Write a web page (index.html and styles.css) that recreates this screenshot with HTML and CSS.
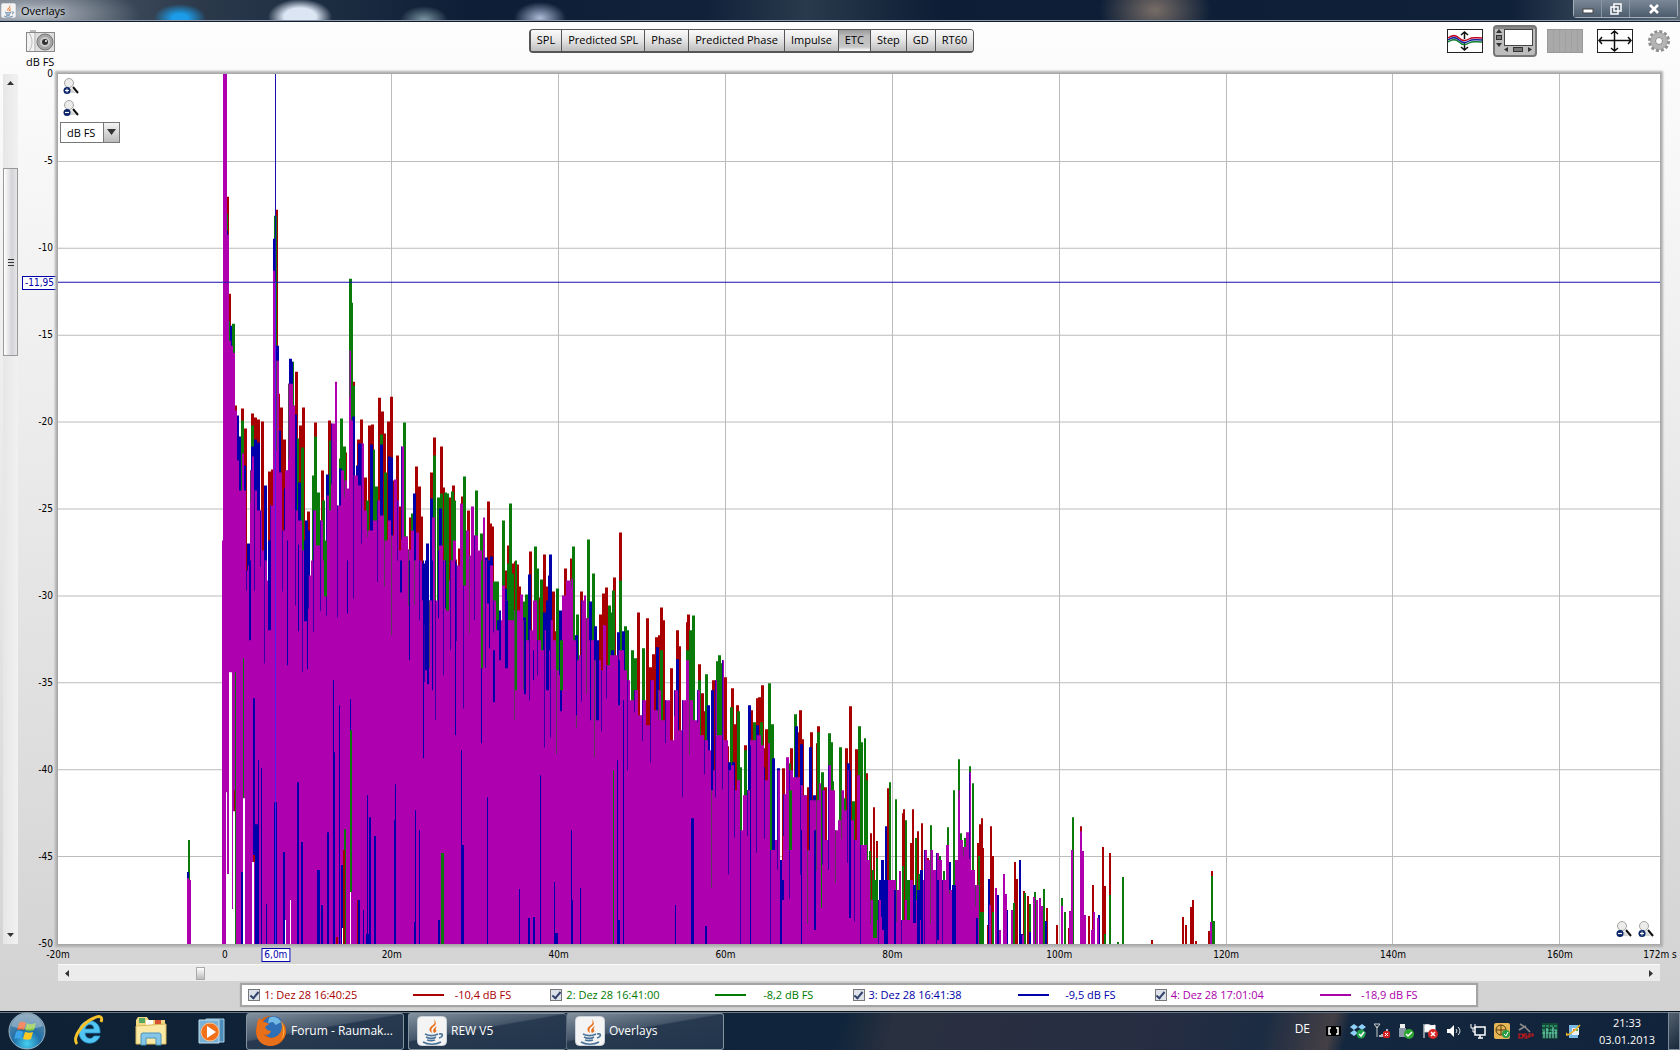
FILE: index.html
```html
<!DOCTYPE html>
<html lang="de">
<head>
    <meta charset="UTF-8">
    <meta name="viewport" content="width=device-width, initial-scale=1.0">
    <title>Overlays</title>
    <link rel="stylesheet" href="styles.css">
</head>
<body>
    <svg class="defs" aria-hidden="true">
        <symbol id="java" viewBox="0 0 30 30">
            <rect x="0.5" y="0.5" width="29" height="29" rx="4" fill="#f4f4f4" stroke="#ccd3da"/>
            <path d="M15 17c-4-3-3-5 1-8 2-2 2-3 1-6 3 4 2 6-1 8-2 2-2 3-1 6z" fill="#e76f1b"/>
            <path d="M17 17c-2-3 0-5 3-7-1 2-2 3-1 4s0 2-2 3z" fill="#e76f1b"/>
            <path d="M8 18c4 2 9 2 13 0M9 21c4 2 7 2 10 0M10 24c3 1 5 1 8 0M6 26c5 3 13 3 18 0M22 18c5-1 4 3 0 4" fill="none" stroke="#4a7399" stroke-width="1.6"/>
        </symbol>
        <symbol id="zoom" viewBox="0 0 16 16">
            <path d="M8 10l5 5H4z" fill="#d4d8d4"/>
            <path d="M10 9l5 6" stroke="#111" stroke-width="2"/>
            <circle cx="6" cy="5" r="4.500" fill="#ececea" stroke="#a4a4a4"/>
            <circle cx="4" cy="12.500" r="3.500" fill="#0a246a"/>
            <path d="M2 12.500h4" stroke="#fff" stroke-width="1.200"/>
        </symbol>
    </svg>

    <header class="titlebar">
        <svg class="title-icon"><use href="#java"/></svg>
        <span class="title">Overlays</span>
        <div class="window-buttons">
            <button aria-label="Minimize"><svg width="12" height="12"><rect x="1" y="6" width="10" height="4" fill="#fff" stroke="#444"/></svg></button>
            <button aria-label="Restore"><svg width="12" height="12"><path d="M4 1h7v7H4zM1 4h7v7H1z" fill="#5a6878" stroke="#fff" stroke-width="1.500"/></svg></button>
            <button class="close" aria-label="Close"><svg width="12" height="12"><path d="M2 2l8 8M10 2l-8 8" stroke="#fff" stroke-width="2.500"/></svg></button>
        </div>
    </header>

    <main class="app">
        <div class="toolbar">
            <button class="icon-button" aria-label="Capture image">
                <svg width="30" height="24" viewBox="0 0 30 24">
                    <rect x="4" y="1" width="6" height="3" fill="#bbb"/>
                    <rect x="0.5" y="3.500" width="28" height="19" fill="#ddd" stroke="#888"/>
                    <path d="M1 4h7v18H1z" fill="#f2f2f2"/>
                    <path d="M3 4c4 5 4 13 0 18M9 4v18" stroke="#bbb" fill="none"/>
                    <circle cx="19" cy="13" r="8" fill="#a4a4a4" stroke="#777"/>
                    <circle cx="19" cy="13" r="5" fill="#ccc"/>
                    <circle cx="19" cy="13" r="3" fill="#333"/>
                    <circle cx="20" cy="12" r="1" fill="#fff"/>
                </svg>
            </button>
            <nav class="tabs">
                <button>SPL</button><button>Predicted SPL</button><button>Phase</button><button>Predicted Phase</button><button>Impulse</button><button class="active">ETC</button><button>Step</button><button>GD</button><button>RT60</button>
            </nav>
            <div class="tools">
                <button class="icon-button" aria-label="Separate traces">
                    <svg width="36" height="24">
                        <rect x="0.5" y="0.5" width="35" height="23" fill="#fff" stroke="#222"/>
                        <path d="M17.500 3v7M17.500 14v7M14 6l3.500-3 3.500 3M14 18l3.500 3 3.500-3" fill="none" stroke="#111" stroke-width="1.500"/>
                        <path d="M1 9c4-3 8-3 11 0s7 3 10 1 6-1 13-1" fill="none" stroke="#c00020" stroke-width="1.500"/>
                        <path d="M1 11c4-3 8-3 11 0s7 3 10 1 6-1 13-1" fill="none" stroke="#1020a0" stroke-width="1.500"/>
                        <path d="M1 13c4-3 8-3 11 0s7 3 10 1 6-1 13-1" fill="none" stroke="#108030" stroke-width="1.500"/>
                    </svg>
                </button>
                <button class="icon-button" aria-label="Scrollbars">
                    <svg width="44" height="32">
                        <rect x="1" y="1" width="42" height="30" rx="3" fill="#bdbdbd" stroke="#777" stroke-width="2"/>
                        <path d="M2 3h40" stroke="#888" stroke-width="2"/>
                        <rect x="11.500" y="4.500" width="28" height="16" fill="#fff" stroke="#444"/>
                        <path d="M3 8l3-4 3 4zM3 18l3 4 3-4zM15 22v5l-4-2.500zM35 22v5l4-2.500z" fill="#333"/>
                        <rect x="3.500" y="10.500" width="5" height="4" fill="#777" stroke="#333"/>
                        <rect x="20.500" y="22.500" width="9" height="4" fill="#777" stroke="#333"/>
                    </svg>
                </button>
                <button class="icon-button" aria-label="Frequency bands">
                    <svg width="36" height="24">
                        <rect x="0.5" y="0.5" width="35" height="23" fill="#a9a9a9" stroke="#999"/>
                        <path d="M6.500 1v22M12.500 1v22M18.500 1v22M24.500 1v22M30.500 1v22" stroke="#a0a0a0"/>
                    </svg>
                </button>
                <button class="icon-button limits" aria-label="Limits">
                    <svg width="36" height="24">
                        <rect x="0.5" y="0.5" width="35" height="23" fill="#fff" stroke="#222"/>
                        <path d="M2 11.500h32M17.500 2v20M5 8l-3 3.500 3 3.500M31 8l3 3.500-3 3.500M14 5l3.500-3 3.500 3M14 19l3.500 3 3.500-3" fill="none" stroke="#111" stroke-width="1.500"/>
                    </svg>
                </button>
                <button class="icon-button gear" aria-label="Controls">
                    <svg width="22" height="22" viewBox="-11 -11 22 22">
                        <circle r="9.500" fill="none" stroke="#8f8f8f" stroke-width="3" stroke-dasharray="3 1.970"/>
                        <circle r="6" fill="none" stroke="#b4b4b4" stroke-width="5"/>
                        <circle r="8.500" fill="none" stroke="#8c8c8c" stroke-width="0.600"/>
                        <circle r="3.500" fill="#fafafa" stroke="#888"/>
                    </svg>
                </button>
            </div>
        </div>

        <div class="unit">dB FS</div>

        <div class="graph">
            <div class="vscroll">
                <button aria-label="Scroll up"><svg width="7" height="5"><path d="M0 5l3.500-4L7 5z" fill="#333"/></svg></button>
                <div class="vthumb"><i></i><i></i><i></i></div>
                <button aria-label="Scroll down"><svg width="7" height="5"><path d="M0 0l3.500 4L7 0z" fill="#333"/></svg></button>
            </div>
            <div class="yaxis">
                <span>0</span><span>-5</span><span>-10</span><span>-15</span><span>-20</span><span>-25</span><span>-30</span><span>-35</span><span>-40</span><span>-45</span><span>-50</span>
                <b class="ycursor">-11,95</b>
            </div>
            <div class="plot">
                <svg id="chart" viewBox="58 73 1602 871" preserveAspectRatio="none" role="img" aria-label="ETC overlays"></svg>
                <div class="plot-tools">
                    <button class="icon-button" aria-label="Zoom in vertically"><svg width="16" height="16"><use href="#zoom"/><path d="M4 10.500v4" stroke="#fff"/></svg></button>
                    <button class="icon-button" aria-label="Zoom out vertically"><svg width="16" height="16"><use href="#zoom"/></svg></button>
                    <span class="select-box">
                        <select aria-label="Y axis unit"><option>dB FS</option><option>%FS</option></select>
                        <svg width="15" height="18"><path d="M3 6h9l-4.500 6z" fill="#333"/></svg>
                    </span>
                </div>
                <div class="plot-zoom">
                    <button class="icon-button" aria-label="Zoom out"><svg width="16" height="16"><use href="#zoom"/></svg></button>
                    <button class="icon-button" aria-label="Zoom in"><svg width="16" height="16"><use href="#zoom"/><path d="M4 10.500v4" stroke="#fff"/></svg></button>
                </div>
            </div>
        </div>

        <div class="below">
            <div class="xaxis">
                <span>-20m</span><span>0</span><span>20m</span><span>40m</span><span>60m</span><span>80m</span><span>100m</span><span>120m</span><span>140m</span><span>160m</span><span>172m s</span>
                <b class="xcursor">6,0m</b>
            </div>
            <div class="hscroll">
                <button aria-label="Scroll left"><svg width="5" height="7"><path d="M5 0v7L1 3.500z" fill="#333"/></svg></button>
                <div class="hthumb"></div>
                <button aria-label="Scroll right"><svg width="5" height="7"><path d="M0 0v7l4-3.500z" fill="#333"/></svg></button>
            </div>
            <div class="legend">
                <label class="red"><input type="checkbox" checked><span>1: Dez 28 16:40:25</span><i></i><output>-10,4 dB FS</output></label>
                <label class="green"><input type="checkbox" checked><span>2: Dez 28 16:41:00</span><i></i><output>-8,2 dB FS</output></label>
                <label class="blue"><input type="checkbox" checked><span>3: Dez 28 16:41:38</span><i></i><output>-9,5 dB FS</output></label>
                <label class="purple"><input type="checkbox" checked><span>4: Dez 28 17:01:04</span><i></i><output>-18,9 dB FS</output></label>
            </div>
        </div>
    </main>

    <footer class="taskbar">
        <button class="start" aria-label="Start">
            <svg width="38" height="38" viewBox="0 0 38 38">
                <defs>
                    <radialGradient id="orb" cx="50%" cy="85%" r="85%"><stop offset="0" stop-color="#45d0f0"/><stop offset="0.45" stop-color="#2070a8"/><stop offset="1" stop-color="#6f8ea4"/></radialGradient>
                </defs>
                <circle cx="19" cy="19" r="18" fill="url(#orb)" stroke="#9db4c4"/>
                <path d="M11 11c3-2 5-1 7 0l-2 7c-2-1-4-1-7 0z" fill="#ee5b22"/>
                <path d="M19 11c3 2 6 1 9 0l-2 7c-3 1-6 1-9 0z" fill="#8cc63e"/>
                <path d="M8 20c3-2 5-1 7 0l-2 7c-2-1-4-1-7 0z" fill="#3aa5e8"/>
                <path d="M17 20c3 1 6 1 8 0l-2 7c-2 1-5 1-8 0z" fill="#fdc820"/>
                <path d="M3 14C6 4 14 2 19 2s13 2 16 12c-9 4-23 4-32 0z" fill="#fff" opacity="0.300"/>
            </svg>
        </button>
        <div class="pinned">
            <button class="ie" aria-label="Internet Explorer">
                <svg width="30" height="32" viewBox="0 0 30 32">
                    <path d="M26 18H11c0 6 7 7 9 3h6c-4 11-21 9-21-4C5 2 27 2 26 18zM11 14h9c0-6-8-6-9 0z" fill="#52c4f2" stroke="#2793cf" stroke-width="0.800"/>
                    <path d="M3 29C-2 23 8 8 20 3c6-3 9-1 7 4" fill="none" stroke="#f6c22c" stroke-width="3"/>
                </svg>
            </button>
            <button aria-label="Explorer">
                <svg width="32" height="30" viewBox="0 0 32 30">
                    <path d="M1 4l2-3h9l2 3h16v24H1z" fill="#eed682"/>
                    <path d="M4 2h6v5H4z" fill="#58a862"/><path d="M11 4h7v5h-7z" fill="#fff"/><path d="M20 4h6v5h-6z" fill="#d85030"/>
                    <path d="M1 10l30-2v20H1z" fill="#fae9a4" stroke="#d8b95c"/>
                    <path d="M6 29V19q0-2 2-2h16q2 0 2 2v10h-5v-7H11v7z" fill="#85c5e8" stroke="#4b94be"/>
                </svg>
            </button>
            <button aria-label="Media Player">
                <svg width="27" height="27" viewBox="0 0 27 27">
                    <path d="M8 1h18v23H8z" fill="#4c8cb8" stroke="#a9d1e8"/>
                    <path d="M1 2h20v23H1z" fill="#79b2d6" stroke="#c4e0f0"/>
                    <circle cx="12" cy="14" r="9" fill="#f0701c" stroke="#ffc08a"/>
                    <path d="M9 8l9 6-9 6z" fill="#fff"/>
                </svg>
            </button>
        </div>
        <div class="tasks">
            <button class="task">
                <svg width="32" height="32" viewBox="0 0 32 32">
                    <circle cx="16" cy="16" r="15" fill="#e66000"/>
                    <circle cx="18" cy="12" r="11" fill="#2f6fb5"/>
                    <path d="M14 3c5-3 10 0 12 4l-5 3-3-3-5 1z" fill="#74b8e4"/>
                    <path d="M2 8l2-5 4 4c3 0 5 1 6 2l-4 3 2 3 4 1c-2 5-5 4-8 3 3 6 13 5 17-1 3-5 2-10 0-13 5 5 8 13 3 19-7 10-22 9-26-2-1-5 0-10 0-14z" fill="#e9701a"/>
                    <path d="M25 5c5 6 6 14 1 20 4-7 3-14-1-20z" fill="#ffd84a"/>
                </svg>
                <span>Forum - Raumak...</span>
            </button>
            <button class="task"><svg width="30" height="30"><use href="#java"/></svg><span>REW V5</span></button>
            <button class="task joined"><svg width="30" height="30"><use href="#java"/></svg><span>Overlays</span></button>
        </div>
        <div class="tray">
            <span class="lang">DE</span>
            <svg width="16" height="16"><rect y="3" width="15" height="10" fill="#000"/><path d="M5 5H3v6h2M10 5h2v6h-2" fill="none" stroke="#fff" stroke-width="1.500"/></svg>
            <svg width="16" height="16"><path d="M4 1l4 3-4 3-4-3zM12 1l4 3-4 3-4-3zM4 7l4 3-4 3-4-3zM12 7l4 3-4 3-4-3z" fill="#8fd0f8"/><circle cx="11" cy="11" r="4.500" fill="#22a04a"/><path d="M9 11l2 2 3-4" stroke="#fff" fill="none" stroke-width="1.500"/></svg>
            <svg width="16" height="16"><path d="M0 1h6L3 5zM3 3v11" stroke="#ccc" fill="none"/><path d="M6 14v-2M8 14v-3M10 14V9M13 14V6" stroke="#eee" stroke-width="1.500"/><rect x="9" y="8" width="7" height="7" rx="2" fill="#d32020"/><path d="M11 10l3 3M14 10l-3 3" stroke="#fff"/></svg>
            <svg width="16" height="16"><path d="M2 1h5v4H2z" fill="#eee"/><path d="M1 5h7v9H1z" fill="#8b98a5"/><circle cx="11" cy="11" r="5" fill="#2ba52f"/><path d="M8 11l2 2 4-4" stroke="#fff" fill="none" stroke-width="1.500"/></svg>
            <svg width="16" height="16"><path d="M2 1v14M3 2c4-2 5 2 10 0v7c-5 2-6-1-10 0z" fill="#fff" stroke="#fff"/><circle cx="11" cy="11" r="5" fill="#d52a25"/><path d="M9 9l4 4M13 9l-4 4" stroke="#fff" stroke-width="1.500"/></svg>
            <svg width="16" height="16"><path d="M1 6h3l4-4v12l-4-4H1z" fill="#fff"/><path d="M10 6q2 2 0 4M12 4q4 4 0 8" fill="none" stroke="#ddd"/></svg>
            <svg width="16" height="16"><path d="M5 4h10v8H5zM8 15h5M10 12v3" fill="none" stroke="#fff" stroke-width="1.500"/><path d="M1 1v4h4V1M3 5v4h2" fill="none" stroke="#fff"/></svg>
            <svg width="16" height="16"><rect width="16" height="16" rx="2" fill="#e6b654"/><circle cx="7" cy="7" r="5" fill="none" stroke="#553810"/><path d="M2 7h10M7 2v10" stroke="#553810"/><circle cx="12" cy="11" r="4" fill="#2a9d48"/><path d="M10 11l2 2 2-4" stroke="#fff" fill="none"/></svg>
            <svg width="16" height="16"><path d="M2 1l5 3 5 5M1 7l7-4" stroke="#8d8d8d" stroke-width="1.500" fill="none"/><path d="M1 11h2q2 0 2 2t-2 2H1zM9 11H6v2h3v2H6M11 15v-4h4v2h-4" fill="none" stroke="#d01818" stroke-width="1.200"/></svg>
            <svg width="16" height="16"><rect width="16" height="16" fill="#154a38"/><path d="M0 3h16M0 7h16M0 10h16" stroke="#36c883" stroke-dasharray="3 1"/><path d="M2 15V8M5 15V5M8 15V9M11 15V4M14 15V7" stroke="#8ce5d2"/></svg>
            <svg width="16" height="16"><path d="M3 2h9v13H3z" fill="#78b9e8"/><rect x="6" y="5" width="7" height="7" fill="#e8f0f4"/><path d="M7 6h2v2H7z" fill="#e05020"/><path d="M10 6h2v2h-2z" fill="#58b040"/><path d="M1 10c-3 5 6 0 13-8" fill="none" stroke="#eeb62b" stroke-width="1.500"/></svg>
            <time class="clock"><span>21:33</span><span>03.01.2013</span></time>
            <button class="show-desktop" aria-label="Show desktop"></button>
        </div>
    </footer>
    <script src="chart.js"></script>
</body>
</html>
```
FILE: styles.css
```css
* {
    box-sizing: border-box;
}
body {
    margin: 0;
    height: 100vh;
    display: flex;
    flex-direction: column;
    font-family: "Open Sans", sans-serif;
    font-size: 11px;
    line-height: 14px;
    color: #000;
    overflow: hidden;
}
button {
    font: inherit;
    color: inherit;
    padding: 0;
    border: 0;
    background: none;
}
svg {
    display: block;
    flex: none;
}
.defs {
    position: absolute;
    width: 0;
    height: 0;
}

/* window title */
.titlebar {
    height: 22px;
    display: flex;
    align-items: center;
    gap: 5px;
    padding-left: 1px;
    border-bottom: 1px solid #101c2c;
    box-shadow: inset 0 -1px #8f9dab;
    background:
        radial-gradient(ellipse 26px 14px at 180px 18px, #1b9be8 30%, transparent),
        radial-gradient(ellipse 32px 18px at 300px 17px, #dbe5f4 50%, transparent),
        radial-gradient(ellipse 24px 14px at 424px 20px, #7d98a4, transparent),
        radial-gradient(ellipse 26px 16px at 540px 18px, #aebbd9, transparent),
        radial-gradient(ellipse 56px 40px at 1155px 10px, #776c66, transparent),
        radial-gradient(ellipse 110px 30px at 30px 14px, #b3bac3, transparent),
        linear-gradient(to right, #56616e, #2b394b 12%, #0d1e36 28%, #11213a 42%, #293a4c 48%, #0c1d35 56%, #0f2139 90%, #5d6b79);
}
.title-icon {
    width: 15px;
    height: 15px;
}
.title {
    font-size: 11px;
    line-height: 18px;
    text-shadow: 0 0 6px #fff;
}
.window-buttons {
    display: flex;
    align-self: flex-start;
    margin: 0 2px 0 auto;
    border: 1px solid #a4aeb8;
    border-top: 0;
    border-radius: 0 0 4px 4px;
}
.window-buttons button {
    width: 28px;
    height: 17px;
    display: grid;
    place-items: center;
    border-right: 1px solid #8995a2;
    background: linear-gradient(#7b8896, #4c5c6e);
}
.window-buttons .close {
    width: 47px;
    border-right: 0;
}

/* application area */
.app {
    flex: 1;
    min-height: 0;
    display: flex;
    flex-direction: column;
    background: linear-gradient(#fdfdfd, #fafafa 8%, #d2d2d2);
}
.toolbar {
    height: 35px;
    display: flex;
    align-items: center;
    justify-content: space-between;
    padding: 2px 10px 0 26px;
}
.icon-button {
    display: block;
}
.tabs {
    display: flex;
    border: 1px solid #555;
    border-left-width: 2px;
    border-bottom-width: 2px;
    border-radius: 4px;
    overflow: hidden;
}
.tabs button {
    height: 21px;
    padding: 0 6px;
    border-right: 1px solid #555;
    background: linear-gradient(#fafafa, #e4e4e4 50%, #bdbdbd);
}
.tabs button:last-child {
    border-right: 0;
}
.tabs .active {
    background: linear-gradient(#9a9a9a, #bcbcbc 30%, #c6c6c6 80%, #fff);
}
.tools {
    display: flex;
    align-items: center;
    gap: 10px;
}
.tools .limits {
    margin: 0 5px 0 4px;
}
.unit {
    padding-left: 26px;
    height: 17px;
    line-height: 10px;
}
.graph {
    flex: 1;
    min-height: 0;
    display: grid;
    grid-template-columns: 15px 36px 1fr;
    padding: 0 20px 0 3px;
    gap: 2px;
}
.vscroll {
    display: flex;
    flex-direction: column;
    background: linear-gradient(to right, #e6e6e6, #f1f1f1);
}
.vscroll button {
    height: 17px;
    display: grid;
    place-items: center;
}
.vthumb {
    height: 188px;
    margin: 77px 0 auto;
    display: flex;
    flex-direction: column;
    align-items: center;
    justify-content: center;
    gap: 2px;
    border: 1px solid #999;
    background: linear-gradient(to right, #fff, #d3d3d8 60%, #e6e6e6);
}
.vthumb i {
    width: 6px;
    height: 1px;
    background: #333;
}
.yaxis,
.xaxis {
    font-family: "DejaVu Sans Condensed", "Open Sans", sans-serif;
    font-size: 10px;
    position: relative;
}
.yaxis {
    display: flex;
    flex-direction: column;
    justify-content: space-between;
    align-items: flex-end;
    padding-right: 3px;
}
.yaxis span {
    height: 0;
    display: flex;
    align-items: center;
}
.ycursor,
.xcursor {
    position: absolute;
    padding: 0 2px;
    font-weight: normal;
    color: #0000a8;
    background: #fff;
    border: 1px solid #0000a8;
    line-height: 12px;
}
.ycursor {
    top: 24%;
    right: -1px;
    transform: translateY(-50%);
}
.xcursor {
    top: 4px;
    left: 13.6%;
    transform: translateX(-50%);
}
.plot {
    position: relative;
    min-height: 0;
    background: #fff;
    box-shadow: 0 0 0 1px #a8a8a8, 0 0 2px 3px #b0b0b0;
}
#chart {
    width: 100%;
    height: 100%;
}
.plot-tools {
    position: absolute;
    top: 4px;
    left: 2px;
}
.plot-tools .icon-button {
    margin: 0 0 6px 3px;
}
.select-box {
    display: flex;
    align-items: center;
    height: 21px;
    border: 1px solid #777;
    background: #fff;
}
.select-box select {
    appearance: none;
    width: 42px;
    border: 0;
    padding: 0 0 0 6px;
    font: inherit;
    background: #fff;
}
.select-box svg {
    background: linear-gradient(#f4f4f4, #bbb);
    border-left: 1px solid #777;
    height: 19px;
    width: 16px;
}
.plot-zoom {
    position: absolute;
    right: 6px;
    bottom: 7px;
    display: flex;
    gap: 6px;
}
.below {
    margin: 0 20px 3px 58px;
}
.xaxis {
    height: 20px;
    padding-top: 4px;
    display: grid;
    grid-template-columns: repeat(9, 20fr) 12fr 0;
}
.xaxis span {
    width: 0;
    display: flex;
    justify-content: center;
    white-space: nowrap;
}
.hscroll {
    height: 17px;
    display: flex;
    align-items: center;
    padding: 0 6px;
    border-top: 1px solid #fafafa;
    background: #ececec;
}
.hthumb {
    width: 9px;
    height: 13px;
    margin: 0 auto 0 127px;
    border: 1px solid #aaa;
    background: linear-gradient(#fff, #bbb);
}
.legend {
    width: 77%;
    height: 20px;
    margin: 4px auto 3px;
    padding: 0 19px 0 6px;
    display: grid;
    grid-template-columns: repeat(4, 1fr);
    background: #fff;
    box-shadow: 0 0 1px 2px #a4a4a4;
}
.legend label {
    display: grid;
    grid-template-columns: 12px 145px 31px 63px;
    gap: 4px;
    align-items: center;
}
.legend input {
    appearance: none;
    width: 12px;
    height: 12px;
    margin: 0;
    display: grid;
    place-items: center;
    border: 1px solid #777;
    background: #dde2ea;
}
.legend input:checked::before {
    content: "";
    width: 3px;
    height: 7px;
    margin-bottom: 2px;
    border: solid #33436c;
    border-width: 0 2px 2px 0;
    transform: rotate(40deg);
}
.legend i {
    height: 2px;
    background: currentColor;
}
.legend output {
    text-align: right;
    white-space: nowrap;
}
.red { color: #a80000; }
.green { color: #007a00; }
.blue { color: #0000a8; }
.purple { color: #aa00aa; }

/* taskbar */
.taskbar {
    height: 39px;
    display: flex;
    align-items: center;
    color: #fff;
    font-size: 12px;
    border-top: 1px solid #08111c;
    box-shadow: inset 0 1px #687786;
    background: linear-gradient(105deg, #0e2135 0, #10253b 50%, #29303f 53%, #272d42 68%, #1c2c43 75%, #443f45 79%, #13273e 80%, #10233a);
}
.start {
    margin-left: 8px;
}
.pinned {
    display: flex;
    align-items: center;
    gap: 31px;
    padding-left: 28px;
}
.tasks {
    display: flex;
    margin-left: 21px;
}
.task {
    width: 158px;
    height: 37px;
    display: flex;
    align-items: center;
    gap: 4px;
    padding-left: 8px;
    margin-right: 4px;
    border: 1px solid #8593a0;
    border-radius: 3px;
    background: linear-gradient(170deg, #82909d 0, #46566a 42%, #283a50 45%, #20344b);
}
.task:nth-child(2) {
    margin-right: 0;
    border-right: 0;
}
.joined {
    border-left-color: #56677a;
}
.tray {
    margin-left: auto;
    height: 100%;
    display: flex;
    align-items: center;
    gap: 8px;
}
.lang {
    margin: 0 8px 5px 0;
}
.clock {
    width: 70px;
    display: flex;
    flex-direction: column;
    align-items: center;
    line-height: 17px;
    font-size: 11px;
    padding-left: 4px;
}
.show-desktop {
    width: 12px;
    height: 100%;
    border: 1px solid #7d8b98;
    background: linear-gradient(135deg, #53616f, #19283a);
}
```
FILE: chart.js
```js
const NS = "http://www.w3.org/2000/svg";
const chart = document.getElementById("chart");
const FLOOR = 944;

// peaks as "x,y" pairs, every peak falls to the floor
const peaks = {
    red: "226,79 228,196 230,293 232,347 235,405 242,408 245,428 252,413 255,417 258,419 262,421 269,471 272,469 276,209 278,393 281,407 284,439 286,482 296,371 300,425 303,407 308,511 315,422 318,500 322,470 329,420 331,424 341,470 345,452 353,381 355,477 358,439 361,419 365,477 369,425 372,424 379,397 382,411 384,433 388,421 391,396 394,480 397,455 399,506 410,517 416,466 419,486 421,516 431,472 434,437 441,446 443,487 449,497 453,485 455,559 459,548 462,496 468,510 488,501 490,523 492,526 505,570 508,545 512,563 515,561 517,564 519,586 530,551 538,597 544,554 547,586 553,591 555,631 565,568 571,558 581,591 600,614 603,593 606,587 611,627 614,577 620,532 638,612 647,618 650,667 653,654 656,637 659,635 661,607 663,620 671,668 677,630 679,646 687,622 688,614 699,664 702,693 704,711 713,680 725,677 727,746 732,688 734,724 737,705 745,745 751,710 753,740 757,698 759,697 762,685 763,748 766,729 783,768 791,748 798,732 800,710 802,739 808,787 811,732 817,743 818,726 825,787 846,748 850,706 856,749 861,763 867,773 871,833 874,807 877,841 888,788 904,809 903,813 911,843 913,809 918,831 922,823 928,858 940,857 978,843 980,824 982,818 983,848 988,925 991,826 993,856 1015,862 1017,879 1024,891 1028,896 1047,908 1057,925 1069,928 1081,826 1089,916 1093,885 1103,847 1105,886 1110,853 1152,940 1183,917 1186,925 1191,907 1193,900 1196,941 1209,931 1212,871",
    green: "189,840 227,213 229,320 233,323 240,438 242,420 252,425 275,215 292,361 297,438 302,447 313,475 315,436 318,492 323,500 330,440 341,418 344,446 340,458 350,278 351,302 353,385 367,500 373,449 376,486 381,434 385,472 391,460 404,422 406,536 412,513 434,455 438,497 441,493 445,492 447,493 452,491 454,500 464,476 466,535 476,490 481,533 494,581 497,581 503,520 508,563 510,503 512,573 523,601 526,594 535,546 537,568 541,579 557,588 573,546 577,614 588,539 593,573 609,605 612,612 613,590 620,580 625,626 627,630 632,650 635,658 643,648 661,650 687,650 690,630 693,615 699,680 706,674 717,661 719,655 721,663 731,707 738,711 740,767 745,750 754,722 761,722 769,683 772,724 789,763 795,714 804,795 818,732 822,772 829,733 831,742 832,781 840,747 844,798 853,801 859,726 862,742 865,738 867,780 870,851 873,870 877,858 890,782 896,799 906,820 903,866 916,838 919,874 931,825 940,856 944,871 948,827 954,790 959,759 961,833 965,838 970,766 973,783 979,856 983,912 993,912 1014,903 1025,893 1030,904 1035,892 1044,889 1062,898 1065,912 1073,817 1105,934 1110,895 1118,942 1123,877 1212,876 1214,921",
    blue: "188,872 227,230 231,325 237,415 239,436 244,465 248,543 252,446 255,439 258,442 265,485 274,238 277,345 279,430 285,488 287,470 290,358 291,361 295,414 299,482 306,520 308,530 327,474 340,468 353,416 357,465 359,443 371,444 381,444 389,456 391,457 414,493 423,563 427,543 431,498 440,508 455,563 486,557 491,556 498,620 505,588 524,617 529,574 544,612 549,575 550,554 560,610 576,635 590,601 595,626 597,657 612,650 618,632 623,631 657,647 677,659 708,705 712,690 729,762 733,762 749,705 757,725 763,767 773,758 778,768 796,726 801,744 810,747 814,795 833,809 844,813 848,763 880,880 883,863 886,826 909,888 914,890 921,870 933,870 950,862 989,879 998,895 1007,910 1020,860 1022,934 1030,932 1046,921 1099,915",
    purple: "188,878 190,880 990,905 996,888 1000,930 1004,874 1006,894 1012,910 1023,935 1034,897 1037,900 1040,898 1042,906 1062,906 1070,911 1072,850 1081,831 1083,851 1085,915 1092,930 1094,912 1098,918 1211,922"
};

// upper edge of the densely filled part of trace 4
const envelope = "222,540 223,73 227,234 229,340 231,345 233,352 235,410 237,460 239,490 242,453 244,490 246,570 248,565 250,470 252,456 254,490 257,510 260,510 262,550 264,560 267,580 270,505 273,270 276,360 279,472 282,530 285,470 288,383 293,405 295,510 298,520 302,550 306,565 308,575 311,560 313,510 316,545 320,520 323,560 326,495 329,510 331,423 335,381 337,505 341,470 344,480 347,488 349,350 351,420 353,475 358,485 361,443 364,510 367,530 373,520 377,500 380,515 384,540 388,520 391,535 394,479 397,500 399,550 401,446 404,536 408,549 411,530 414,560 416,532 419,560 422,600 424,625 427,610 429,600 432,517 435,600 439,545 443,560 448,580 450,560 453,540 456,565 460,503 463,585 466,530 469,555 471,506 474,535 478,550 482,560 483,517 485,560 490,565 493,600 496,630 499,620 502,585 505,600 508,620 514,610 520,594 523,620 526,640 529,630 533,600 537,640 541,650 544,630 547,650 550,620 553,640 556,670 559,675 562,595 566,580 571,578 573,640 576,660 579,655 581,600 584,595 586,618 589,640 594,660 598,660 601,670 603,625 606,665 610,655 618,650 624,670 627,680 630,700 634,690 638,715 642,700 646,725 650,680 654,710 658,690 661,720 665,700 670,740 674,690 678,730 682,700 686,660 689,700 693,720 697,690 700,735 704,740 708,750 711,790 713,770 715,680 717,735 722,660 724,740 728,770 731,765 734,790 737,780 740,830 743,795 747,790 750,740 756,735 761,745 764,780 768,743 770,850 775,840 777,770 780,860 783,794 786,757 789,770 793,777 800,785 803,795 807,850 810,800 816,800 819,783 822,790 825,840 828,765 831,790 835,830 838,820 841,790 844,810 847,770 850,820 854,840 857,775 860,845 867,860 870,900 874,920 878,900 882,930 886,880 892,880 896,890 899,871 901,920 905,900 909,880 913,900 917,920 921,880 924,850 927,860 930,850 933,870 936,853 939,860 942,880 946,845 949,890 955,860 958,790 960,840 963,847 966,832 969,772 971,870 975,885 979,944";

// gaps in trace 4 through which the traces below are seen: x,top,bottom,width
const gaps = {
    blue: "253,698,855,2 255,824,944,3 258,760,944,1 261,768,944,1 266,904,944,1 241,872,944,2 249,560,640,2 274,802,944,3 283,852,944,2 297,782,944,2 301,842,944,2 317,870,944,3 321,905,944,2 327,832,944,2 333,680,944,1 333,752,944,2 339,705,944,1 350,699,740,1 341,865,944,2 358,900,944,2 363,910,944,1 366,934,944,4 367,795,944,1 369,817,944,2 374,836,944,2 394,820,944,2 395,784,944,1 415,810,944,1 419,830,944,1 414,922,944,2 438,920,944,2 461,750,944,1 462,845,944,2 487,797,944,1 519,889,944,1 528,918,944,2 533,917,944,2 540,775,944,1 554,882,944,1 555,933,944,3 571,830,944,1 580,888,944,1 268,540,630,3 287,540,665,1 298,544,631,1 304,540,621,4 307,560,669,1 347,560,613,1 400,560,592,2 409,560,660,1 423,560,758,1 425,560,670,4 427,570,684,2 432,560,690,1 438,550,618,1 445,560,608,2 455,560,735,1 481,600,743,1 487,560,603,3 489,560,648,1 493,650,702,2 499,610,660,2 505,600,668,3 515,600,655,1 524,620,694,2 533,650,680,1 546,600,690,3 560,680,711,2 576,640,715,1 590,610,720,1 596,640,720,3 618,660,705,2 572,900,944,1 617,760,944,1 618,920,944,2 623,700,944,1 675,905,944,1 691,818,944,3 705,926,944,2 750,745,944,1 780,860,944,2 781,880,900,3 801,830,944,1 814,830,930,2 849,770,918,2 884,880,944,4 881,860,917,3 894,890,944,2 917,890,944,3 913,885,923,3 921,870,944,2 937,880,940,2 952,885,944,4 976,918,944,2",
    green: "235,672,944,1 243,658,798,1 350,730,892,2 344,829,944,2 441,853,944,3 324,540,596,3 613,770,944,1 481,560,668,2 560,640,690,3 446,540,610,3 515,560,690,2 873,880,938,4 821,780,908,1 907,880,920,3 979,912,944,3 789,790,850,3",
    red: "234,790,811,1 253,855,862,2 336,937,944,2 343,850,944,2 357,900,944,1",
    white: "226,792,944,1 229,672,944,3 226,874,944,3 232,909,944,2 233,811,944,2 243,798,944,2 252,862,944,2 285,920,944,1 290,900,944,1 350,892,944,1 342,928,944,1"
};

const colors = { red: "#a80000", green: "#0a7a0a", blue: "#0000aa", purple: "#ae00ae", white: "#ffffff" };

function add(d, color) {
    const path = document.createElementNS(NS, "path");
    path.setAttribute("d", d);
    path.setAttribute("fill", color);
    chart.appendChild(path);
}

function rect(x, y, w, bottom) {
    return `M${x} ${y}h${w}V${bottom}h${-w}z`;
}

function parse(text) {
    return text.split(" ").map((item) => item.split(",").map(Number));
}

// same sequence on every load
let seed = 7;
function random() {
    seed = (seed * 16807) % 2147483647;
    return seed / 2147483647;
}

function drawGrid() {
    let d = "";
    for (let i = 1; i < 10; i++) {
        d += rect(58, 73 + i * 87, 1602, 74 + i * 87);
        d += rect(Math.round(57.6 + i * 166.85), 73, 1, FLOOR);
    }
    add(d, "#bcbcbc");
}

function drawPeaks(name) {
    add(parse(peaks[name]).map(([x, y]) => rect(x - 1, y, x > 232 && x < 860 ? 3 : 2, FLOOR)).join(""), colors[name]);
}

function drawEnvelope() {
    const tops = parse(envelope);
    let d = "";
    let streaks = "";
    let greens = "";
    for (let i = 0; i < tops.length - 1; i++) {
        const [x, y] = tops[i];
        const next = tops[i + 1][0];
        d += rect(x, y, next - x, FLOOR);
        if (x > 245 && i % 2) {
            const end = Math.min(FLOOR, y + 20 + random() * 110);
            if (random() > 0.3) streaks += rect(x, y, 1, end);
            else greens += rect(x, y, 1, end - 20);
        }
    }
    add(d, colors.purple);
    add(streaks, "#3500a9");
    add(greens, "#5b3b5b");
}

drawGrid();
drawPeaks("red");
drawPeaks("green");
drawPeaks("blue");
drawEnvelope();
drawPeaks("purple");
for (const name of ["blue", "green", "red", "white"]) {
    add(parse(gaps[name]).map(([x, top, bottom, w]) => rect(x, top, w, bottom)).join(""), colors[name]);
}

// cursor lines
add(rect(58, 281, 1602, 282), "#1a10b0");
add(rect(275, 73, 1, 281), "#1a10b0");
add(rect(275, 281, 1, FLOOR), "#4a20f0");
```
